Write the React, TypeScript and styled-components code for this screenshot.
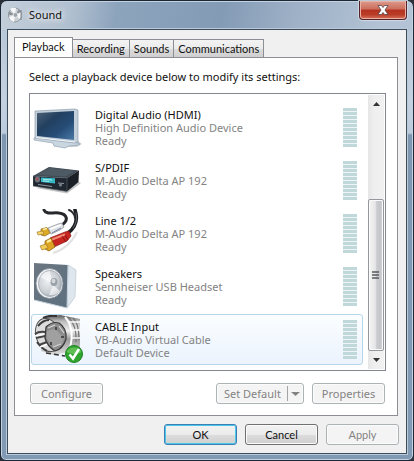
import React, { useState } from "react";
import styled, { createGlobalStyle, css } from "styled-components";

const Global = createGlobalStyle`
  * { box-sizing: border-box; }
  body { margin: 0; background: #2b3038; }
  body, button { font-family: "Noto Sans", "Open Sans", sans-serif; font-size: 11px; color: #111; }
  button { padding: 0; margin: 0; }
`;

const Window = styled.div`
  display: flex;
  flex-direction: column;
  min-height: 100vh;
  padding: 0 6px 6px;
  border: 1px solid #1d2733;
  border-radius: 7px 7px 6px 6px;
  box-shadow: inset 0 0 0 1px #c3d3e4;
  background:
    linear-gradient(100deg, #c3ced9 0, #b1c0d0 70px, #8da4bd 115px, #849bb6 220px, #9db0c6 290px, #b3c3d5 380px) top / 100% 29px no-repeat,
    linear-gradient(#b4c3d3, #c3d1e1 100px, #bccbdc 132px, #7f96b0 134px, #8299b4);
`;

const TitleBar = styled.header`
  display: flex;
  align-items: flex-start;
  height: 28px;
`;

const Title = styled.h1`
  flex: 1;
  display: flex;
  align-items: center;
  gap: 6px;
  height: 27px;
  margin: 0;
  font-size: 11px;
  font-weight: 400;
  text-shadow: 0 0 6px #fff, 0 0 8px #fff;
`;

const CloseButton = styled.button`
  display: flex;
  align-items: center;
  justify-content: center;
  width: 48px;
  height: 19px;
  border: 1px solid #54232a;
  border-top: 0;
  border-radius: 0 0 4px 4px;
  box-shadow: inset 0 0 0 1px #e9b0a4, 0 0 1px 1px #cfdae6;
  background: linear-gradient(#dc9a8c, #cd6d5c 45%, #b4321f 50%, #b93c27 75%, #d8725a);
`;

const Client = styled.main`
  flex: 1;
  display: flex;
  flex-direction: column;
  border: 1px solid #3e4b5a;
  box-shadow: 0 0 0 1px #b9cadb;
  background: #f0f0f0;
  padding: 7px 7px 8px 6px;
`;

const Tabs = styled.div`
  display: flex;
  align-items: flex-end;
  height: 21px;
  margin-bottom: -1px;
`;

const Tab = styled.button<{ $active: boolean }>`
  height: 19px;
  padding: 0 4px;
  border: 1px solid #8c8e94;
  border-left-width: 0;
  background: linear-gradient(#f3f3f3, #ebebeb 50%, #dddddd 50%, #cfcfcf);
  font-family: Lato, "Noto Sans", sans-serif;
  line-height: 16px;
  white-space: nowrap;
  ${(p) => p.$active && css`
    height: 21px;
    padding: 0 7px 2px;
    border-left-width: 1px;
    border-bottom-color: #fff;
    background: #fff;
  `}
`;

const Panel = styled.section`
  flex: 1;
  display: flex;
  flex-direction: column;
  margin-right: 1px;
  padding: 10px 11px 11px 14px;
  border: 1px solid #8c8e94;
  background: #fff;
`;

const Prompt = styled.p`
  margin: 0 0 7px;
  line-height: 18px;
  white-space: nowrap;
`;

const DeviceBox = styled.div`
  flex: 1;
  display: flex;
  gap: 5px;
  padding: 1px;
  border: 1px solid #828790;
`;

const DeviceList = styled.ul`
  flex: 1;
  display: flex;
  flex-direction: column;
  gap: 2px;
  margin: 0;
  padding: 7px 0 4px;
  list-style: none;
`;

const Device = styled.button<{ $selected: boolean }>`
  display: flex;
  align-items: center;
  width: 100%;
  height: 51px;
  padding: 0 5px 0 1px;
  border: 1px solid transparent;
  border-radius: 3px;
  background: transparent;
  text-align: left;
  ${(p) => p.$selected && css`
    border-color: #b8d6ea;
    background: linear-gradient(#fbfdff, #ebf3fd);
  `}
`;

const DeviceText = styled.span`
  flex: 1;
  margin-left: 12px;
  color: #838383;
  line-height: 13px;
`;

const Line = styled.span`
  display: block;
`;

const DeviceName = styled(Line)`
  color: #111;
`;

const Meter = styled.span`
  width: 14px;
  height: 39px;
  background: repeating-linear-gradient(#c0d8da 0 3px, #eef5f6 3px 4px);
`;

const Scrollbar = styled.div`
  display: flex;
  flex-direction: column;
  width: 16px;
  background: linear-gradient(90deg, #e6e6e6, #efefef 40%, #f1f1f1);
`;

const ArrowButton = styled.button`
  display: flex;
  align-items: center;
  justify-content: center;
  height: 18px;
  border: 0;
  background: transparent;
`;

const ScrollTrack = styled.div`
  flex: 1;
  display: flex;
  flex-direction: column;
  justify-content: flex-end;
`;

const Thumb = styled.div`
  display: flex;
  align-items: center;
  justify-content: center;
  height: 64%;
  border: 1px solid #94979b;
  border-radius: 2px;
  box-shadow: inset 0 0 0 1px #fafafa;
  background: linear-gradient(90deg, #f5f5f5, #e6e6e8 45%, #cbcccf 55%, #c4c5c9 80%, #dcdcdf);
`;

const Actions = styled.div`
  display: flex;
  gap: 8px;
  margin-top: 12px;
  padding: 0 1px;
`;

const PushButton = styled.button<{ $primary?: boolean; $first?: boolean }>`
  width: 73px;
  height: 21px;
  border: 1px solid #707070;
  border-radius: 3px;
  box-shadow: inset 0 0 0 1px #fbfbfb;
  background: linear-gradient(#f2f2f2, #ebebeb 50%, #dddddd 50%, #cfcfcf);
  line-height: 18px;
  white-space: nowrap;
  ${(p) => p.$first && css`margin-right: auto;`}
  ${(p) => p.$primary && css`
    border-color: #3c7fb1;
    box-shadow: inset 0 0 0 1px #48c6ee;
  `}
  &:disabled {
    border-color: #adb2b5;
    background: #f4f4f4;
    color: #838383;
  }
`;

const Footer = styled.footer`
  display: flex;
  justify-content: flex-end;
  gap: 8px;
  margin-top: 8px;
  ${PushButton} {
    font-family: Lato, "Noto Sans", sans-serif;
  }
`;

const SplitButton = styled(PushButton)`
  display: flex;
  align-items: center;
  justify-content: space-between;
  width: 88px;
  padding: 0 3px 0 7px;
`;

const SplitArrow = styled.span`
  display: flex;
  align-items: center;
  height: 15px;
  padding-left: 3px;
  border-left: 1px solid #a0a4a7;
`;

const IconSvg = styled.svg`
  display: block;
  flex: none;
  width: 50px;
  height: 49px;
`;

const MonitorIcon = () => (
  <IconSvg viewBox="0 0 50 49" aria-hidden="true">
    <defs>
      <linearGradient id="screen" x1="0" y1="0" x2="1" y2="1">
        <stop offset="0" stopColor="#4f6478" />
        <stop offset=".35" stopColor="#22405f" />
        <stop offset=".65" stopColor="#264c76" />
        <stop offset="1" stopColor="#4a7aa6" />
      </linearGradient>
    </defs>
    <path d="M28 44 44 44 49 41 44 37z" fill="#9aa3ab" opacity=".5" />
    <path d="M1 35 4 34 42 39 47 41 45 42 36 43 32 45 21 43 20 40 1 37z" fill="#c9d5df" stroke="#94a4b1" strokeWidth=".7" />
    <path d="M2 8 42 6 45 7 45 39 42 40 2 35z" fill="#c3cfd9" stroke="#8093a4" strokeWidth=".6" />
    <path d="M4 10 41 8 41 37 4 33z" fill="url(#screen)" />
    <path d="M3 34.500 42 39" stroke="#f1f5f8" fill="none" />
  </IconSvg>
);

const ReceiverIcon = () => (
  <IconSvg viewBox="0 0 50 49" aria-hidden="true">
    <path d="M3 32 34 37.500 48 27 46 26z" fill="#9c9c9c" opacity=".6" />
    <path d="M0 20 16 11 46 14.500 34 22z" fill="#3d4851" />
    <path d="M3 19 17 11.800 43 14.800 33 20.500z" fill="#4d5963" />
    <path d="M34 22 46 14.500 45.500 26 34 35.500z" fill="#1a2026" />
    <path d="M0 20 34 22 34 35.500 0 30z" fill="#202730" stroke="#59646e" strokeWidth=".6" />
    <path d="M8 21.500 22 22.300 22 27.500 8 26z" fill="#35b8c4" />
    <path d="M10 23.300 19 24M10 25 16 25.500" stroke="#b4f5f5" strokeWidth=".9" />
    <ellipse cx="4.500" cy="23.500" rx="2.700" ry="3" fill="#69737d" />
    <ellipse cx="4" cy="23" rx="1.400" ry="1.600" fill="#a65357" />
    <path d="M5 28.500 19 30.500M25 27 31 27.500" stroke="#aab3ba" strokeWidth=".8" />
    <circle cx="27.500" cy="29" r="1.500" fill="#76828d" />
  </IconSvg>
);

const LineIcon = () => (
  <IconSvg viewBox="0 0 50 49" aria-hidden="true">
    <path d="M20 44C34 40 40 31 44 23" stroke="#cfcfcf" strokeWidth="2" fill="none" opacity=".6" />
    <g fill="none" strokeLinecap="round">
      <path d="M11 1C13 6 20 3 26 4C34 5 36 11 29 16" stroke="#26282b" strokeWidth="3" />
      <path d="M42 1C45 10 43 18 35 24" stroke="#1c1d20" strokeWidth="3.600" />
      <path d="M36 1C39 2 42 6 42 9" stroke="#292b2e" strokeWidth="2" />
      <path d="M43 4C44.500 10 43 15 40 19" stroke="#73777b" strokeWidth=".8" />
    </g>
    <path d="M15 19 25 15 29 14 31 18 27 21 18 25z" fill="#dfe3e7" stroke="#878d94" strokeWidth=".7" />
    <path d="M17 20 28 16" stroke="#fff" strokeWidth="1.500" />
    <path d="M19 24 28 19" stroke="#7780a3" />
    <path d="M8 20 14 18.500 17 24 12 27 8 26z" fill="#e0aa29" stroke="#8d6415" strokeWidth=".7" />
    <path d="M4 23 10 22 11 25 5 26z" fill="#f4d265" stroke="#99711f" strokeWidth=".6" />
    <path d="M10 20.500 14 19.500" stroke="#fff0a0" strokeWidth="1.500" />
    <path d="M17 29 32 23 36 22 38 27 34 32 21 38z" fill="#c72720" stroke="#8b1717" strokeWidth=".7" />
    <path d="M19 30.500 32 25.500" stroke="#f28c78" strokeWidth="2" />
    <path d="M29 27 33 33M32 26 35 31" stroke="#7c1010" strokeWidth=".8" />
    <path d="M12 32 18 29 22 38 16 42 12 40z" fill="#dda321" stroke="#835b13" strokeWidth=".7" />
    <path d="M7 37 13 35 15 39 9 41z" fill="#f1cc57" stroke="#976b19" strokeWidth=".6" />
    <path d="M14 33 18 31" stroke="#fff0a0" strokeWidth="2" />
  </IconSvg>
);

const SpeakerIcon = () => (
  <IconSvg viewBox="0 0 50 49" aria-hidden="true">
    <defs>
      <radialGradient id="cone" cx=".4" cy=".4" r=".7">
        <stop offset="0" stopColor="#eff1f3" />
        <stop offset=".65" stopColor="#c9ced3" />
        <stop offset="1" stopColor="#929aa3" />
      </radialGradient>
      <linearGradient id="box" x1="0" y1="0" x2="1" y2="1">
        <stop offset="0" stopColor="#6b7782" />
        <stop offset="1" stopColor="#5d6f7e" />
      </linearGradient>
    </defs>
    <path d="M35 3 43 8 42 35 34 46z" fill="#dfe7ee" stroke="#b3bfc9" strokeWidth=".6" />
    <path d="M1 1 35 3 34 46 1 38z" fill="url(#box)" />
    <path d="M35 3 34 46 1 38" fill="none" stroke="#c4d3df" />
    <ellipse cx="16.500" cy="21.500" rx="13.500" ry="15" fill="#f3f5f7" stroke="#7e8892" strokeWidth=".8" />
    <ellipse cx="17" cy="21.500" rx="11.500" ry="13" fill="url(#cone)" stroke="#aab1b8" />
    <path d="M19 21 7 15Q11 9 17 9zM20 23 27 29Q23 34 16 33z" fill="#fff" opacity=".6" />
    <ellipse cx="21" cy="20" rx="3.500" ry="4" fill="#9aa1a8" />
    <ellipse cx="20.500" cy="19" rx="2" ry="2.200" fill="#d5d9dd" />
  </IconSvg>
);

const CableIcon = () => (
  <IconSvg viewBox="0 0 50 49" aria-hidden="true">
    <defs>
      <linearGradient id="metal" x1="0" y1="0" x2="0" y2="1">
        <stop offset="0" stopColor="#555" />
        <stop offset=".15" stopColor="#bbb" />
        <stop offset=".4" stopColor="#eee" />
        <stop offset=".6" stopColor="#999" />
        <stop offset="1" stopColor="#ddd" />
      </linearGradient>
    </defs>
    <path d="M12 2 27 0 47 4 47 32 36 37 20 40 8 36z" fill="url(#metal)" />
    <path d="M35 2Q44 10 43 27M40 3Q46 8 46 25" fill="none" stroke="#777" strokeWidth="1.200" />
    <path d="M36 7H47M38 15H47M39 23H47" stroke="#fafafa" strokeWidth="1.600" />
    <path d="M32 2Q42 13 37 33" fill="none" stroke="#fff" strokeWidth="2" />
    <path d="M10 3Q16 0 24 1" stroke="#333" strokeWidth="2" fill="none" />
    <ellipse cx="15" cy="20" rx="12" ry="17" transform="rotate(-18 15 20)" fill="#ddd" stroke="#555" />
    <path d="M5 11Q10 5 16 5M4 27Q8 33 14 36" fill="none" stroke="#3d3d3d" strokeWidth="2" />
    <path d="M2 19Q6 16 12 17M3 23 12 21M6 30 14 27" stroke="#444" strokeWidth="2" fill="none" />
    <path d="M2 21 12 19M7 32 15 29" stroke="#fff" strokeWidth="1.600" />
    <path d="M13 12Q19 6 26 8 34 13 33 24 30 34 22 36 14 31 12 23z" fill="#8c8c8c" stroke="#383838" strokeWidth="1.200" />
    <path d="M14 16 22 14 31 23 29 29 20 31 14 24z" fill="#a0a0a0" />
    <path d="M15 13 22 10M26 11 31 18M20 32 28 29" stroke="#d6d6d6" strokeWidth="1.200" />
    <path d="M23 12v3M28 22h3M18 27v3" stroke="#333" strokeWidth="1.500" />
    <path d="M13 38 32 41" stroke="#333" strokeWidth="1.500" strokeDasharray="5 3" />
    <circle cx="41" cy="39" r="8.500" fill="#2fa52e" stroke="#1f8423" />
    <path d="M33.500 37A8 7 0 0 1 48.500 37Q41 41 33.500 37z" fill="#73ca66" opacity=".7" />
    <path d="M36.500 39.500 40 43.500 46 34" fill="none" stroke="#fff" strokeWidth="2.600" />
  </IconSvg>
);

const SoundIcon = () => (
  <svg width="16" height="16" viewBox="0 0 16 16" aria-hidden="true">
    <ellipse cx="8" cy="8" rx="6.500" ry="7" fill="#cbd0d4" stroke="#858c93" strokeWidth=".8" />
    <path d="M8 8 3 2Q6 0 9 1zM8 8 14 5Q15 9 13 12zM8 8 7 15Q3 14 2 10z" fill="#f6f7f8" />
    <path d="M8 8 12 2 14 5zM8 8 1 8 2 4z" fill="#8d949a" />
    <circle cx="8.500" cy="8" r="2.400" fill="#9da4aa" stroke="#edf0f2" strokeWidth=".8" />
    <path d="M14 3V13" stroke="#69747e" strokeWidth=".8" />
  </svg>
);

const Arrow = ({ down = false, color = "#333", width = 7 }: { down?: boolean; color?: string; width?: number }) => (
  <svg width={width} height="4" viewBox="0 0 8 5" preserveAspectRatio="none" aria-hidden="true">
    <path d={down ? "M0 0H8L4 5z" : "M0 5H8L4 0z"} fill={color} />
  </svg>
);

const tabNames = ["Playback", "Recording", "Sounds", "Communications"];

const devices = [
  { name: "Digital Audio (HDMI)", driver: "High Definition Audio Device", status: "Ready", Icon: MonitorIcon },
  { name: "S/PDIF", driver: "M-Audio Delta AP 192", status: "Ready", Icon: ReceiverIcon },
  { name: "Line 1/2", driver: "M-Audio Delta AP 192", status: "Ready", Icon: LineIcon },
  { name: "Speakers", driver: "Sennheiser USB Headset", status: "Ready", Icon: SpeakerIcon },
  { name: "CABLE Input", driver: "VB-Audio Virtual Cable", status: "Default Device", Icon: CableIcon },
];

export default function App() {
  const [tab, setTab] = useState("Playback");
  const [selected, setSelected] = useState("CABLE Input");

  return (
    <>
      <Global />
      <Window>
        <TitleBar>
          <Title><SoundIcon />Sound</Title>
          <CloseButton aria-label="Close">
            <svg width="12" height="10" viewBox="0 0 12 10" aria-hidden="true">
              <path d="M1 .5H4.500L6 2.500 7.500 .5H11L8 5 11 9.500H7.500L6 7.500 4.500 9.500H1L4 5z" fill="#fff" stroke="#53454b" strokeWidth=".8" />
            </svg>
          </CloseButton>
        </TitleBar>
        <Client>
          <Tabs role="tablist">
            {tabNames.map((name) => (
              <Tab key={name} role="tab" aria-selected={tab === name} $active={tab === name} onClick={() => setTab(name)}>
                {name}
              </Tab>
            ))}
          </Tabs>
          <Panel role="tabpanel" aria-label={tab}>
            <Prompt>Select a playback device below to modify its settings:</Prompt>
            <DeviceBox>
              <DeviceList>
                {devices.map(({ name, driver, status, Icon }) => (
                  <li key={name}>
                    <Device $selected={selected === name} aria-pressed={selected === name} onClick={() => setSelected(name)}>
                      <Icon />
                      <DeviceText>
                        <DeviceName>{name}</DeviceName>
                        <Line>{driver}</Line>
                        <Line>{status}</Line>
                      </DeviceText>
                      <Meter />
                    </Device>
                  </li>
                ))}
              </DeviceList>
              <Scrollbar>
                <ArrowButton aria-label="Scroll up"><Arrow /></ArrowButton>
                <ScrollTrack>
                  <Thumb>
                    <svg width="8" height="8" viewBox="0 0 8 8" aria-hidden="true">
                      <path d="M0 1H7M0 4H7M0 7H7" stroke="#555a60" strokeWidth="1.400" />
                    </svg>
                  </Thumb>
                </ScrollTrack>
                <ArrowButton aria-label="Scroll down"><Arrow down /></ArrowButton>
              </Scrollbar>
            </DeviceBox>
            <Actions>
              <PushButton disabled $first>Configure</PushButton>
              <SplitButton disabled>
                Set Default
                <SplitArrow><Arrow down color="#838383" width={9} /></SplitArrow>
              </SplitButton>
              <PushButton disabled>Properties</PushButton>
            </Actions>
          </Panel>
          <Footer>
            <PushButton $primary>OK</PushButton>
            <PushButton>Cancel</PushButton>
            <PushButton disabled>Apply</PushButton>
          </Footer>
        </Client>
      </Window>
    </>
  );
}
